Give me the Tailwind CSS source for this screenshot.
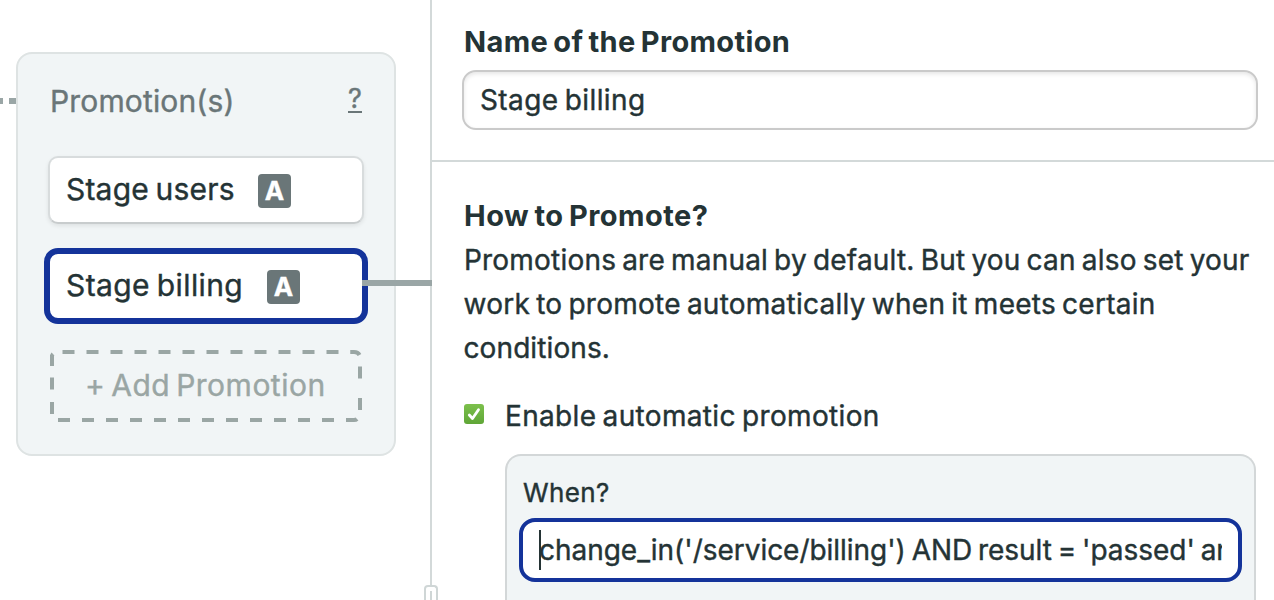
<!DOCTYPE html>
<html lang="en">
<head>
<meta charset="utf-8">
<title>Promotion settings</title>
<script src="https://cdn.jsdelivr.net/npm/@tailwindcss/browser@4"></script>
</head>
<body class="flex h-[600px] w-[1274px] overflow-hidden bg-white font-['Inter',sans-serif] text-[28px] leading-[44px] text-[#243335] whitespace-nowrap [-webkit-text-stroke:0.4px_currentColor] [word-spacing:-2px]">
  <section class="relative w-[430px] shrink-0 pt-[52px] pl-4">
    <div class="absolute top-[98px] left-0 h-1.5 w-[3px] bg-[#9aa6a6]"></div>
    <div class="absolute top-[98px] left-[9px] h-1.5 w-[7px] bg-[#9aa6a6]"></div>
    <div class="h-[404px] w-[380px] rounded-2xl border-2 border-[#dee3e3] bg-[#f1f5f6] px-[30px] pt-[25px] text-[30px]">
      <div class="flex h-11 items-center justify-between pl-0.5 text-[#6a7678]">
        <h2 class="tracking-[0.15px]">Promotion(s)</h2>
        <a class="mt-[-4px] mr-0.5 flex h-[27px] w-[14px] justify-center border-b-2 border-[#6a7678] text-[27px] leading-[25px]">?</a>
      </div>
      <div class="mt-[33px] flex h-[68px] w-[316px] items-center rounded-[10px] border-2 border-[#d8dcdd] border-b-[#c8cccd] bg-white pl-4 shadow-[0_2px_4px_rgba(0,0,0,0.08)]">
        <span class="w-[192px] -translate-y-px tracking-[0.2px]">Stage users</span>
        <span class="mt-0.5 flex h-[34px] w-[33px] items-center justify-center rounded bg-[#6a7678] text-[26px] font-bold text-white">A</span>
      </div>
      <div class="mt-6 -ml-1 flex h-[76px] w-[324px] items-center rounded-[14px] border-6 border-[#14339a] bg-white pl-4">
        <span class="w-[201px] -translate-y-px tracking-[0.4px]">Stage billing</span>
        <span class="mt-0.5 flex h-[34px] w-[33px] items-center justify-center rounded bg-[#6a7678] text-[26px] font-bold text-white">A</span>
      </div>
      <div class="relative mt-[26px] ml-0.5 h-[72px] w-[312px] pt-[13px] pl-[35px] text-[#9aa6a4]">
        <svg class="absolute inset-0" width="312" height="72" fill="none" stroke="#9aa6a4" stroke-width="4">
          <path d="M12.500 2H301" stroke-dasharray="12 12"/>
          <path d="M300.500 2H304Q308 2 309.500 5"/>
          <path d="M8 70H300" stroke-dasharray="12 12"/>
          <path d="M296 70H304Q306 70 307 69"/>
          <path d="M2 5V16M2 27.500V39.500M2 52V64M310 16.500V28.500M310 48V60"/>
          <path d="M2 6Q2 5 3 4"/>
        </svg>
        <span class="tracking-[0.5px] [word-spacing:-3px]">+ Add Promotion</span>
      </div>
    </div>
    <div class="absolute top-[280px] left-[362px] h-1.5 w-[70px] bg-[#9aa6a6]"></div>
    <div class="absolute top-[585px] left-[424px] z-10 h-[15px] w-[14px] rounded-t border-2 border-b-0 border-[#cfd6d6] bg-white">
      <div class="mx-auto mt-1 h-[9px] w-0.5 bg-[#cfd6d6]"></div>
    </div>
  </section>
  <aside class="min-w-0 flex-1 border-l-2 border-[#d3d9d9]">
    <div class="h-[162px] border-b-2 border-[#d3d9d9] pt-5 pl-[30px]">
      <h3 class="pl-0.5 text-[29px] font-bold tracking-[0.35px] [-webkit-text-stroke:0px]">Name of the Promotion</h3>
      <div class="mt-1.5 h-[60px] w-[796px] rounded-[14px] border-2 border-[#cacaca] pl-4 leading-14 tracking-[0.4px] shadow-[inset_0_2px_4px_rgba(0,0,0,0.1)]">Stage billing</div>
    </div>
    <div class="pt-8 pl-[30px]">
      <h3 class="pl-0.5 text-[29px] font-bold tracking-[0.48px] [-webkit-text-stroke:0px]">How to Promote?</h3>
      <p class="pl-0.5 tracking-[0.2px]">Promotions are manual by default. But you can also set your</p>
      <p class="pl-[1.5px] tracking-[0.25px]">work to promote automatically when it meets certain</p>
      <p class="pl-[1.5px] tracking-[0.1px]">conditions.</p>
      <div class="mt-6 flex">
        <svg class="mt-[10px] ml-0.5" width="20" height="20" viewBox="0 0 20 20">
          <defs><linearGradient id="g" x2="0" y2="1"><stop stop-color="#7cc04c"/><stop offset="1" stop-color="#5fa637"/></linearGradient></defs>
          <rect width="20" height="20" rx="3" fill="url(#g)"/>
          <path d="M5.300 11L8.500 14.500L14.500 5.700" fill="none" stroke="#fff" stroke-width="2.800" stroke-linecap="round" stroke-linejoin="round"/>
        </svg>
        <span class="ml-[21px] tracking-[0.34px]">Enable automatic promotion</span>
      </div>
      <div class="mt-4 ml-[43px] h-[146px] w-[751px] rounded-t-2xl border-2 border-b-0 border-[#d3d7d8] bg-[#f1f5f6] px-3 pt-[15px]">
        <div class="ml-1 text-[26px] tracking-[0.4px]">When?</div>
        <div class="mt-[3px] h-16 w-[723px] rounded-2xl border-4 border-[#14339a] bg-white px-4 pt-2">
          <div class="flex h-10 items-center overflow-hidden tracking-[-0.03px]">
            <i class="h-10 w-0.5 shrink-0 bg-[#243335]"></i>
            <span class="-ml-[2px]">change_in('/service/billing') AND result = 'passed' and</span>
          </div>
        </div>
      </div>
    </div>
  </aside>
</body>
</html>
